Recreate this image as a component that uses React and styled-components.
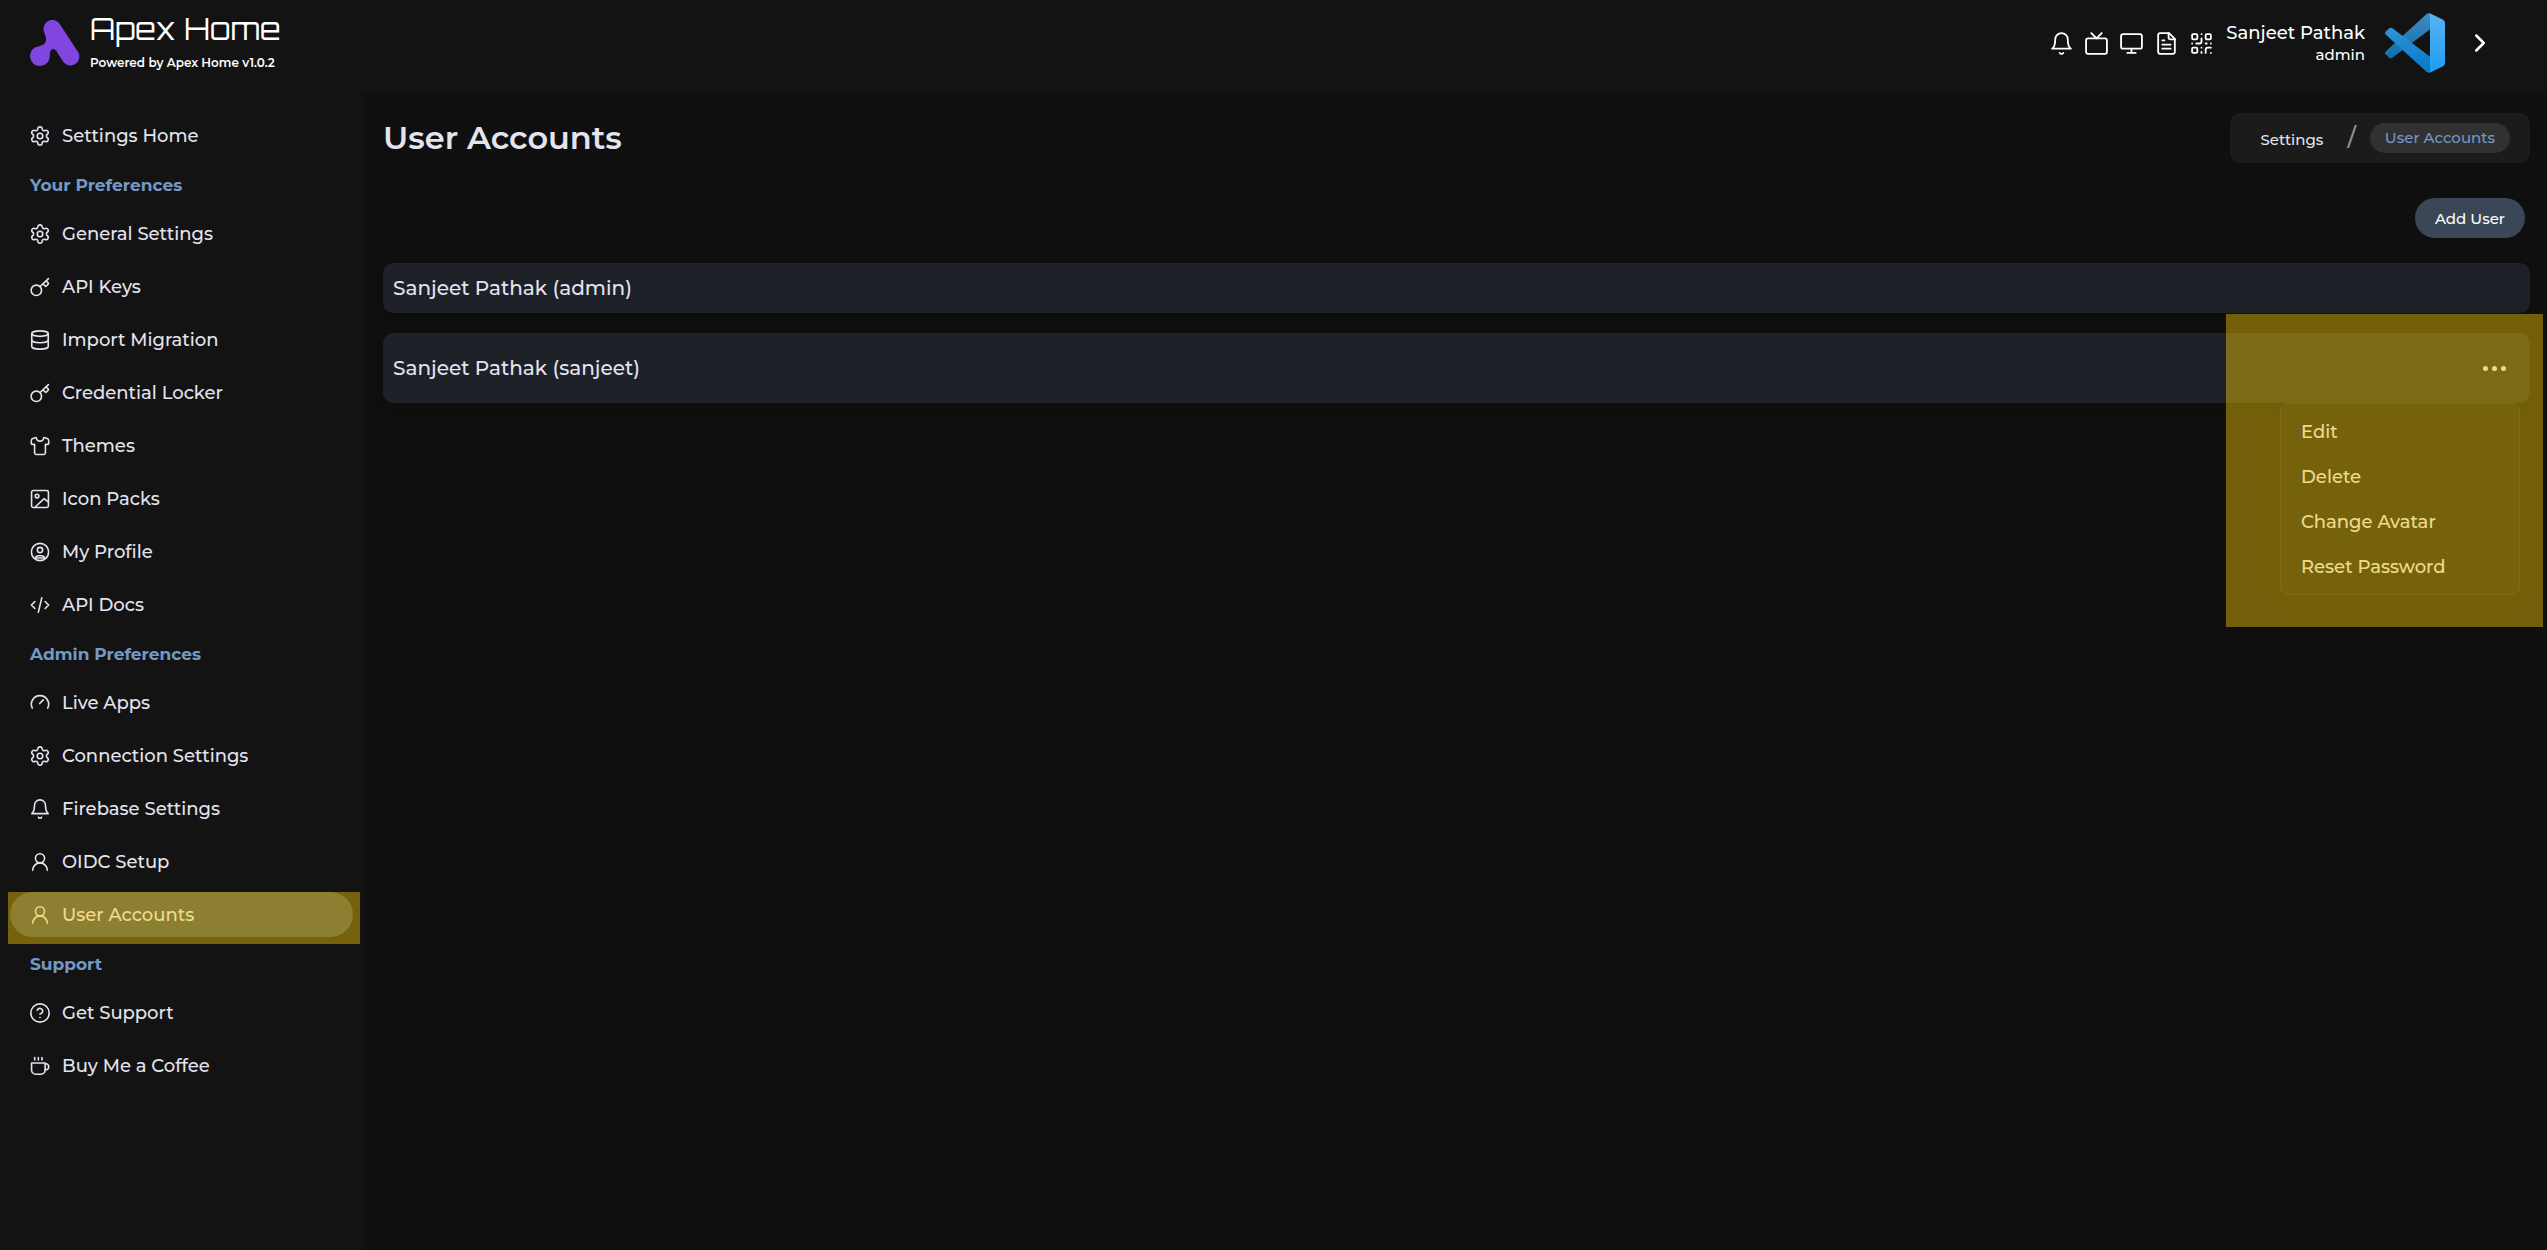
import React from "react";
import styled, { createGlobalStyle } from "styled-components";
import {
  ChevronRight,
  CircleHelp,
  Database,
  Monitor,
  QrCode,
  Settings,
  Tv,
  UserRound,
} from "lucide-react";

const Icon = ({ children, size = 22, strokeWidth = 1.75 }) => (
  <svg
    width={size}
    height={size}
    viewBox="0 0 24 24"
    fill="none"
    stroke="currentColor"
    strokeWidth={strokeWidth}
    strokeLinecap="round"
    strokeLinejoin="round"
    aria-hidden="true"
  >
    {children}
  </svg>
);

const KeyIcon = (props) => (
  <Icon {...props}>
    <circle cx="8" cy="15.6" r="5.7" />
    <path d="M12.1 11.5 21.2 2.8" />
    <path d="m18.6 5.4 2.3 2.1a1 1 0 0 1 0 1.4l-1.9 2a1 1 0 0 1-1.4 0l-2.2-2.3" />
  </Icon>
);

const ShirtIcon = (props) => (
  <Icon {...props}>
    <path d="M7.8 2.8 4.2 3.9a2.4 2.4 0 0 0-1.7 2.3v3a1 1 0 0 0 1 1h2.6v9.2a1.8 1.8 0 0 0 1.8 1.8h8.2a1.8 1.8 0 0 0 1.8-1.8v-9.2h2.6a1 1 0 0 0 1-1v-3a2.4 2.4 0 0 0-1.7-2.3l-3.6-1.1c-1 5.2-7.4 5.2-8.4 0z" />
  </Icon>
);

const PictureIcon = (props) => (
  <Icon {...props}>
    <rect x="2.8" y="2.8" width="18.4" height="18.4" rx="1.8" />
    <circle cx="8.8" cy="8.8" r="2" />
    <path d="m6.5 21 10-9.4 4.7 3.9" />
  </Icon>
);

const ProfileIcon = (props) => (
  <Icon {...props}>
    <circle cx="12" cy="12" r="9.4" />
    <circle cx="12" cy="9.8" r="2.9" />
    <path d="M6.8 18.6c.6-1.7 2-2.5 3.6-2.5h3.2c1.6 0 3 .8 3.6 2.5z" />
  </Icon>
);

const CodeIcon = (props) => (
  <Icon {...props}>
    <path d="M6.4 8.2 2.6 12l3.8 3.8M17.6 8.2l3.8 3.8-3.8 3.8M13.9 4.2 10.2 19.8" />
  </Icon>
);

const GaugeIcon = (props) => (
  <Icon {...props}>
    <path d="M3.6 17.6a9.4 9.4 0 1 1 16.8 0" />
    <path d="m11.6 12.6 4-4" />
  </Icon>
);

const BellIcon = (props) => (
  <Icon {...props}>
    <path d="M6 8a6 6 0 0 1 12 0c0 7 3 9 3 9H3s3-2 3-9" />
    <path d="M10.3 21a1.94 1.94 0 0 0 3.4 0" />
  </Icon>
);

const DocIcon = (props) => (
  <Icon {...props}>
    <path d="M14.5 2H6a2 2 0 0 0-2 2v16a2 2 0 0 0 2 2h12a2 2 0 0 0 2-2V7.5z" />
    <path d="M14 2v4a2 2 0 0 0 2 2h4M10 9H8M16 13H8M16 17H8" />
  </Icon>
);

const CoffeeIcon = (props) => (
  <Icon {...props}>
    <path d="M2.8 8.8h14.8v7.6a4.6 4.6 0 0 1-4.6 4.6H7.4a4.6 4.6 0 0 1-4.6-4.6z" />
    <path d="M17.6 9.6h.6a3.3 3.3 0 0 1 0 6.6h-.6M6.2 2.8v2.6M10.2 2.8v2.6M14.2 2.8v2.6" />
  </Icon>
);

const ApexLogo = () => (
  <svg width="50" height="46" viewBox="0 0 50 46" aria-hidden="true">
    <path
      fill="#8146e0"
      d="M13.6 9A8.7 8.7 0 0 1 30 4.6L48.4 32.4A9 9 0 0 1 33.8 42.6L27.4 32.8C25.2 27.8 20.8 27.8 19.9 33L19.8 36A9.9 9.9 0 1 1 9 26.2C15.2 25.4 17.2 21 15.6 16.4C14.6 13.2 13.6 12 13.6 9Z"
    />
  </svg>
);

const CodeLogo = () => (
  <svg width="60" height="60" viewBox="0 0 100 100" aria-hidden="true">
    <defs>
      <linearGradient id="shine" x1="0" y1="0" x2="0" y2="1">
        <stop offset="0" stopColor="#fff" stopOpacity="0.25" />
        <stop offset="1" stopColor="#fff" stopOpacity="0" />
      </linearGradient>
      <mask id="logoMask">
        <path
          fill="#fff"
          fillRule="evenodd"
          d="M70.9119 99.3171C72.4869 99.9307 74.2828 99.8914 75.8725 99.1264L96.4608 89.2197C98.6242 88.1787 100 85.9892 100 83.5872V16.4133C100 14.0113 98.6243 11.8218 96.4609 10.7808L75.8725 0.873756C73.7862 -0.130129 71.3446 0.11576 69.5135 1.44695C69.252 1.63711 69.0028 1.84943 68.769 2.08341L29.3551 38.0415L12.1872 25.0096C10.589 23.7965 8.35363 23.8959 6.86933 25.2461L1.36303 30.2549C-0.452552 31.9064 -0.454633 34.7627 1.35853 36.417L16.2471 50.0001L1.35853 63.5832C-0.454633 65.2374 -0.452552 68.0938 1.36303 69.7453L6.86933 74.7541C8.35363 76.1043 10.589 76.2037 12.1872 74.9906L29.3551 61.9587L68.769 97.9167C69.3925 98.5406 70.1246 99.0104 70.9119 99.3171ZM75.0152 27.2989L45.1091 50.0001L75.0152 72.7012V27.2989Z"
        />
      </mask>
    </defs>
    <g mask="url(#logoMask)">
      <path
        fill="#0065a9"
        d="M96.4614 10.7962L75.8569 0.875542C73.4719 -0.272773 70.6217 0.211611 68.75 2.08333L1.29858 63.5832C-0.515693 65.2373 -0.513607 68.0937 1.30308 69.7452L6.81272 74.754C8.29793 76.1042 10.5347 76.2036 12.1338 74.9905L93.3609 13.3699C96.086 11.3026 100 13.2462 100 16.6667V16.4275C100 14.0265 98.6246 11.8378 96.4614 10.7962Z"
      />
      <path
        fill="#007acc"
        d="M96.4614 89.2038L75.8569 99.1245C73.4719 100.273 70.6217 99.7884 68.75 97.9167L1.29858 36.4169C-0.515693 34.7627 -0.513607 31.9063 1.30308 30.2548L6.81272 25.246C8.29793 23.8958 10.5347 23.7964 12.1338 25.0095L93.3609 86.6301C96.086 88.6974 100 86.7538 100 83.3334V83.5726C100 85.9735 98.6246 88.1622 96.4614 89.2038Z"
      />
      <path
        fill="#1f9cf0"
        d="M75.8578 99.1263C73.4721 100.274 70.6219 99.7885 68.75 97.9166C71.0564 100.223 75 98.5895 75 95.3278V4.67213C75 1.41039 71.0564 -0.223106 68.75 2.08329C70.6219 0.211402 73.4721 -0.273666 75.8578 0.873633L96.4587 10.7807C98.6234 11.8217 100 14.0112 100 16.4132V83.5871C100 85.9891 98.6234 88.1786 96.4586 89.2196L75.8578 99.1263Z"
      />
      <rect width="100" height="100" fill="url(#shine)" />
    </g>
  </svg>
);

const navigation = [
  { label: "Settings Home", icon: Settings },
  { heading: "Your Preferences" },
  { label: "General Settings", icon: Settings },
  { label: "API Keys", icon: KeyIcon },
  { label: "Import Migration", icon: Database },
  { label: "Credential Locker", icon: KeyIcon },
  { label: "Themes", icon: ShirtIcon },
  { label: "Icon Packs", icon: PictureIcon },
  { label: "My Profile", icon: ProfileIcon },
  { label: "API Docs", icon: CodeIcon },
  { heading: "Admin Preferences" },
  { label: "Live Apps", icon: GaugeIcon },
  { label: "Connection Settings", icon: Settings },
  { label: "Firebase Settings", icon: BellIcon },
  { label: "OIDC Setup", icon: UserRound },
  { label: "User Accounts", icon: UserRound, active: true },
  { heading: "Support" },
  { label: "Get Support", icon: CircleHelp },
  { label: "Buy Me a Coffee", icon: CoffeeIcon },
];

const toolbar = [
  { label: "Notifications", icon: BellIcon },
  { label: "TV mode", icon: Tv },
  { label: "Display", icon: Monitor },
  { label: "Documents", icon: DocIcon },
  { label: "QR code", icon: QrCode },
];

const menuItems = ["Edit", "Delete", "Change Avatar", "Reset Password"];

const App = () => (
  <>
    <GlobalStyle />
    <Page>
      <Header>
        <Brand href="#">
          <ApexLogo />
          <BrandText>
            <BrandName>Apex Home</BrandName>
            <BrandNote>Powered by Apex Home v1.0.2</BrandNote>
          </BrandText>
        </Brand>
        <HeaderRight>
          <Toolbar>
            {toolbar.map(({ label, icon: ToolIcon }) => (
              <IconButton key={label} type="button" aria-label={label}>
                <ToolIcon size={25} strokeWidth={1.75} />
              </IconButton>
            ))}
          </Toolbar>
          <Account>
            <AccountName>Sanjeet Pathak</AccountName>
            <AccountRole>admin</AccountRole>
          </Account>
          <CodeLogo />
          <NextButton type="button" aria-label="Open panel">
            <ChevronRight size={30} strokeWidth={2} />
          </NextButton>
        </HeaderRight>
      </Header>

      <Body>
        <Sidebar>
          {navigation.map(({ heading, label, icon: NavIcon, active }) =>
            heading ? (
              <NavHeading key={heading}>{heading}</NavHeading>
            ) : (
              <NavLink key={label} href="#" $active={active}>
                <NavIcon size={22} strokeWidth={1.75} />
                {label}
                {active && <NavHighlight />}
              </NavLink>
            )
          )}
        </Sidebar>

        <Main>
          <TitleRow>
            <Title>User Accounts</Title>
            <Breadcrumb aria-label="Breadcrumb">
              <CrumbLink href="#">Settings</CrumbLink>
              <Slash>/</Slash>
              <Crumb>User Accounts</Crumb>
            </Breadcrumb>
          </TitleRow>
          <Actions>
            <AddButton type="button">Add User</AddButton>
          </Actions>
          <UserList>
            <UserCard>Sanjeet Pathak (admin)</UserCard>
            <UserCard $tall>
              Sanjeet Pathak (sanjeet)
              <MoreButton type="button" aria-label="More options">
                <Dot />
                <Dot />
                <Dot />
              </MoreButton>
              <Menu>
                {menuItems.map((item) => (
                  <MenuButton key={item} type="button">
                    {item}
                  </MenuButton>
                ))}
              </Menu>
              <MenuHighlight />
            </UserCard>
          </UserList>
        </Main>
      </Body>
    </Page>
  </>
);

const GlobalStyle = createGlobalStyle`
  * {
    box-sizing: border-box;
  }

  body {
    margin: 0;
    background: #0f0f10;
    color: #e4e4ee;
    font-family: Montserrat, Inter, "Open Sans", sans-serif;
    font-weight: 500;
  }

  button {
    border: none;
    background: none;
    padding: 0;
    color: inherit;
    font: inherit;
    cursor: pointer;
  }

  a {
    color: inherit;
    text-decoration: none;
  }
`;

const Page = styled.div`
  min-height: 100vh;
  display: flex;
  flex-direction: column;
`;

const Header = styled.header`
  height: 93px;
  padding: 0 52px 7px 30px;
  display: flex;
  align-items: center;
  justify-content: space-between;
  background: #131314;
  color: #fff;
`;

const Brand = styled.a`
  display: flex;
  align-items: center;
  gap: 10px;
`;

const BrandText = styled.div`
  display: flex;
  flex-direction: column;
  gap: 8px;
`;

const BrandName = styled.span`
  font-family: Orbitron, "DejaVu Sans", sans-serif;
  font-size: 30px;
  font-weight: 400;
  line-height: 32px;
`;

const BrandNote = styled.span`
  font-size: 12px;
  font-weight: 600;
  line-height: 20px;
`;

const HeaderRight = styled.div`
  display: flex;
  align-items: center;
  gap: 12px;
`;

const Toolbar = styled.div`
  display: flex;
  gap: 10px;
`;

const IconButton = styled.button`
  display: flex;
`;

const Account = styled.div`
  padding-top: 2px;
  margin-right: 8px;
  display: flex;
  flex-direction: column;
  align-items: flex-end;
`;

const AccountName = styled.span`
  font-size: 18px;
  line-height: 22px;
`;

const AccountRole = styled.span`
  font-size: 15px;
  line-height: 22px;
`;

const NextButton = styled(IconButton)`
  margin-left: 8px;
`;

const Body = styled.div`
  flex: 1;
  display: flex;
`;

const Sidebar = styled.nav`
  flex: 0 0 363px;
  padding: 20px 10px;
  display: flex;
  flex-direction: column;
  gap: 8px;
  background: #131314;
`;

const NavHeading = styled.h2`
  margin: 0;
  padding: 2px 0 0 20px;
  color: #7399c6;
  font-size: 17px;
  font-weight: 700;
  line-height: 35px;
`;

const NavLink = styled.a`
  position: relative;
  height: 45px;
  padding: 0 19px;
  display: flex;
  align-items: center;
  gap: 11px;
  border-radius: 23px;
  background: ${(props) => (props.$active ? "#3a4556" : "transparent")};
  font-size: 18px;
`;

const Highlight = styled.span`
  position: absolute;
  background: rgba(255, 207, 0, 0.42);
  pointer-events: none;
`;

const NavHighlight = styled(Highlight)`
  inset: 0 -7px -7px -2px;
`;

const Main = styled.main`
  flex: 1;
  min-width: 0;
  padding: 20px 17px 20px 20px;
`;

const TitleRow = styled.div`
  display: flex;
  align-items: center;
  justify-content: space-between;
`;

const Title = styled.h1`
  margin: 0;
  font-size: 32px;
  font-weight: 600;
  line-height: 50px;
`;

const Breadcrumb = styled.nav`
  height: 50px;
  padding: 0 20px 0 30px;
  display: flex;
  align-items: center;
  border-radius: 10px;
  background: #1b1b1c;
  font-size: 15px;
`;

const CrumbLink = styled.a`
  padding-top: 2px;
`;

const Slash = styled.span`
  padding: 0 14px 0 24px;
  color: #8f8f94;
  font-size: 24px;
  line-height: 30px;
`;

const Crumb = styled.span`
  padding: 0 15px;
  border-radius: 15px;
  background: #313132;
  color: #7399c6;
  line-height: 30px;
`;

const Actions = styled.div`
  padding: 35px 5px 25px;
  display: flex;
  justify-content: flex-end;
`;

const AddButton = styled.button`
  height: 40px;
  padding: 0 20px;
  border-radius: 20px;
  background: #3b4656;
  color: #fff;
  font-size: 15px;
`;

const UserList = styled.div`
  display: flex;
  flex-direction: column;
  gap: 20px;
`;

const UserCard = styled.div`
  position: relative;
  height: ${(props) => (props.$tall ? "70px" : "50px")};
  padding: 0 20px 0 10px;
  display: flex;
  align-items: center;
  justify-content: space-between;
  border-radius: 10px;
  background: #1e2128;
  box-shadow: 0 4px 8px rgba(0, 0, 0, 0.1);
  font-size: 20px;
`;

const MoreButton = styled.button`
  padding: 10px 4px;
  display: flex;
  gap: 4px;
`;

const Dot = styled.span`
  width: 5px;
  height: 5px;
  border-radius: 50%;
  background: #e4e4ee;
`;

const Menu = styled.div`
  position: absolute;
  top: 100%;
  right: 10px;
  width: 240px;
  padding: 5px 0;
  border: 1px solid #28282d;
  border-radius: 8px;
  background: #131314;
  box-shadow: 0 4px 12px rgba(0, 0, 0, 0.1);
`;

const MenuButton = styled.button`
  display: block;
  width: 100%;
  height: 45px;
  padding: 0 20px;
  font-size: 18px;
  text-align: left;
`;

const MenuHighlight = styled(Highlight)`
  top: -19px;
  right: -13px;
  width: 317px;
  height: 313px;
`;

export default App;
